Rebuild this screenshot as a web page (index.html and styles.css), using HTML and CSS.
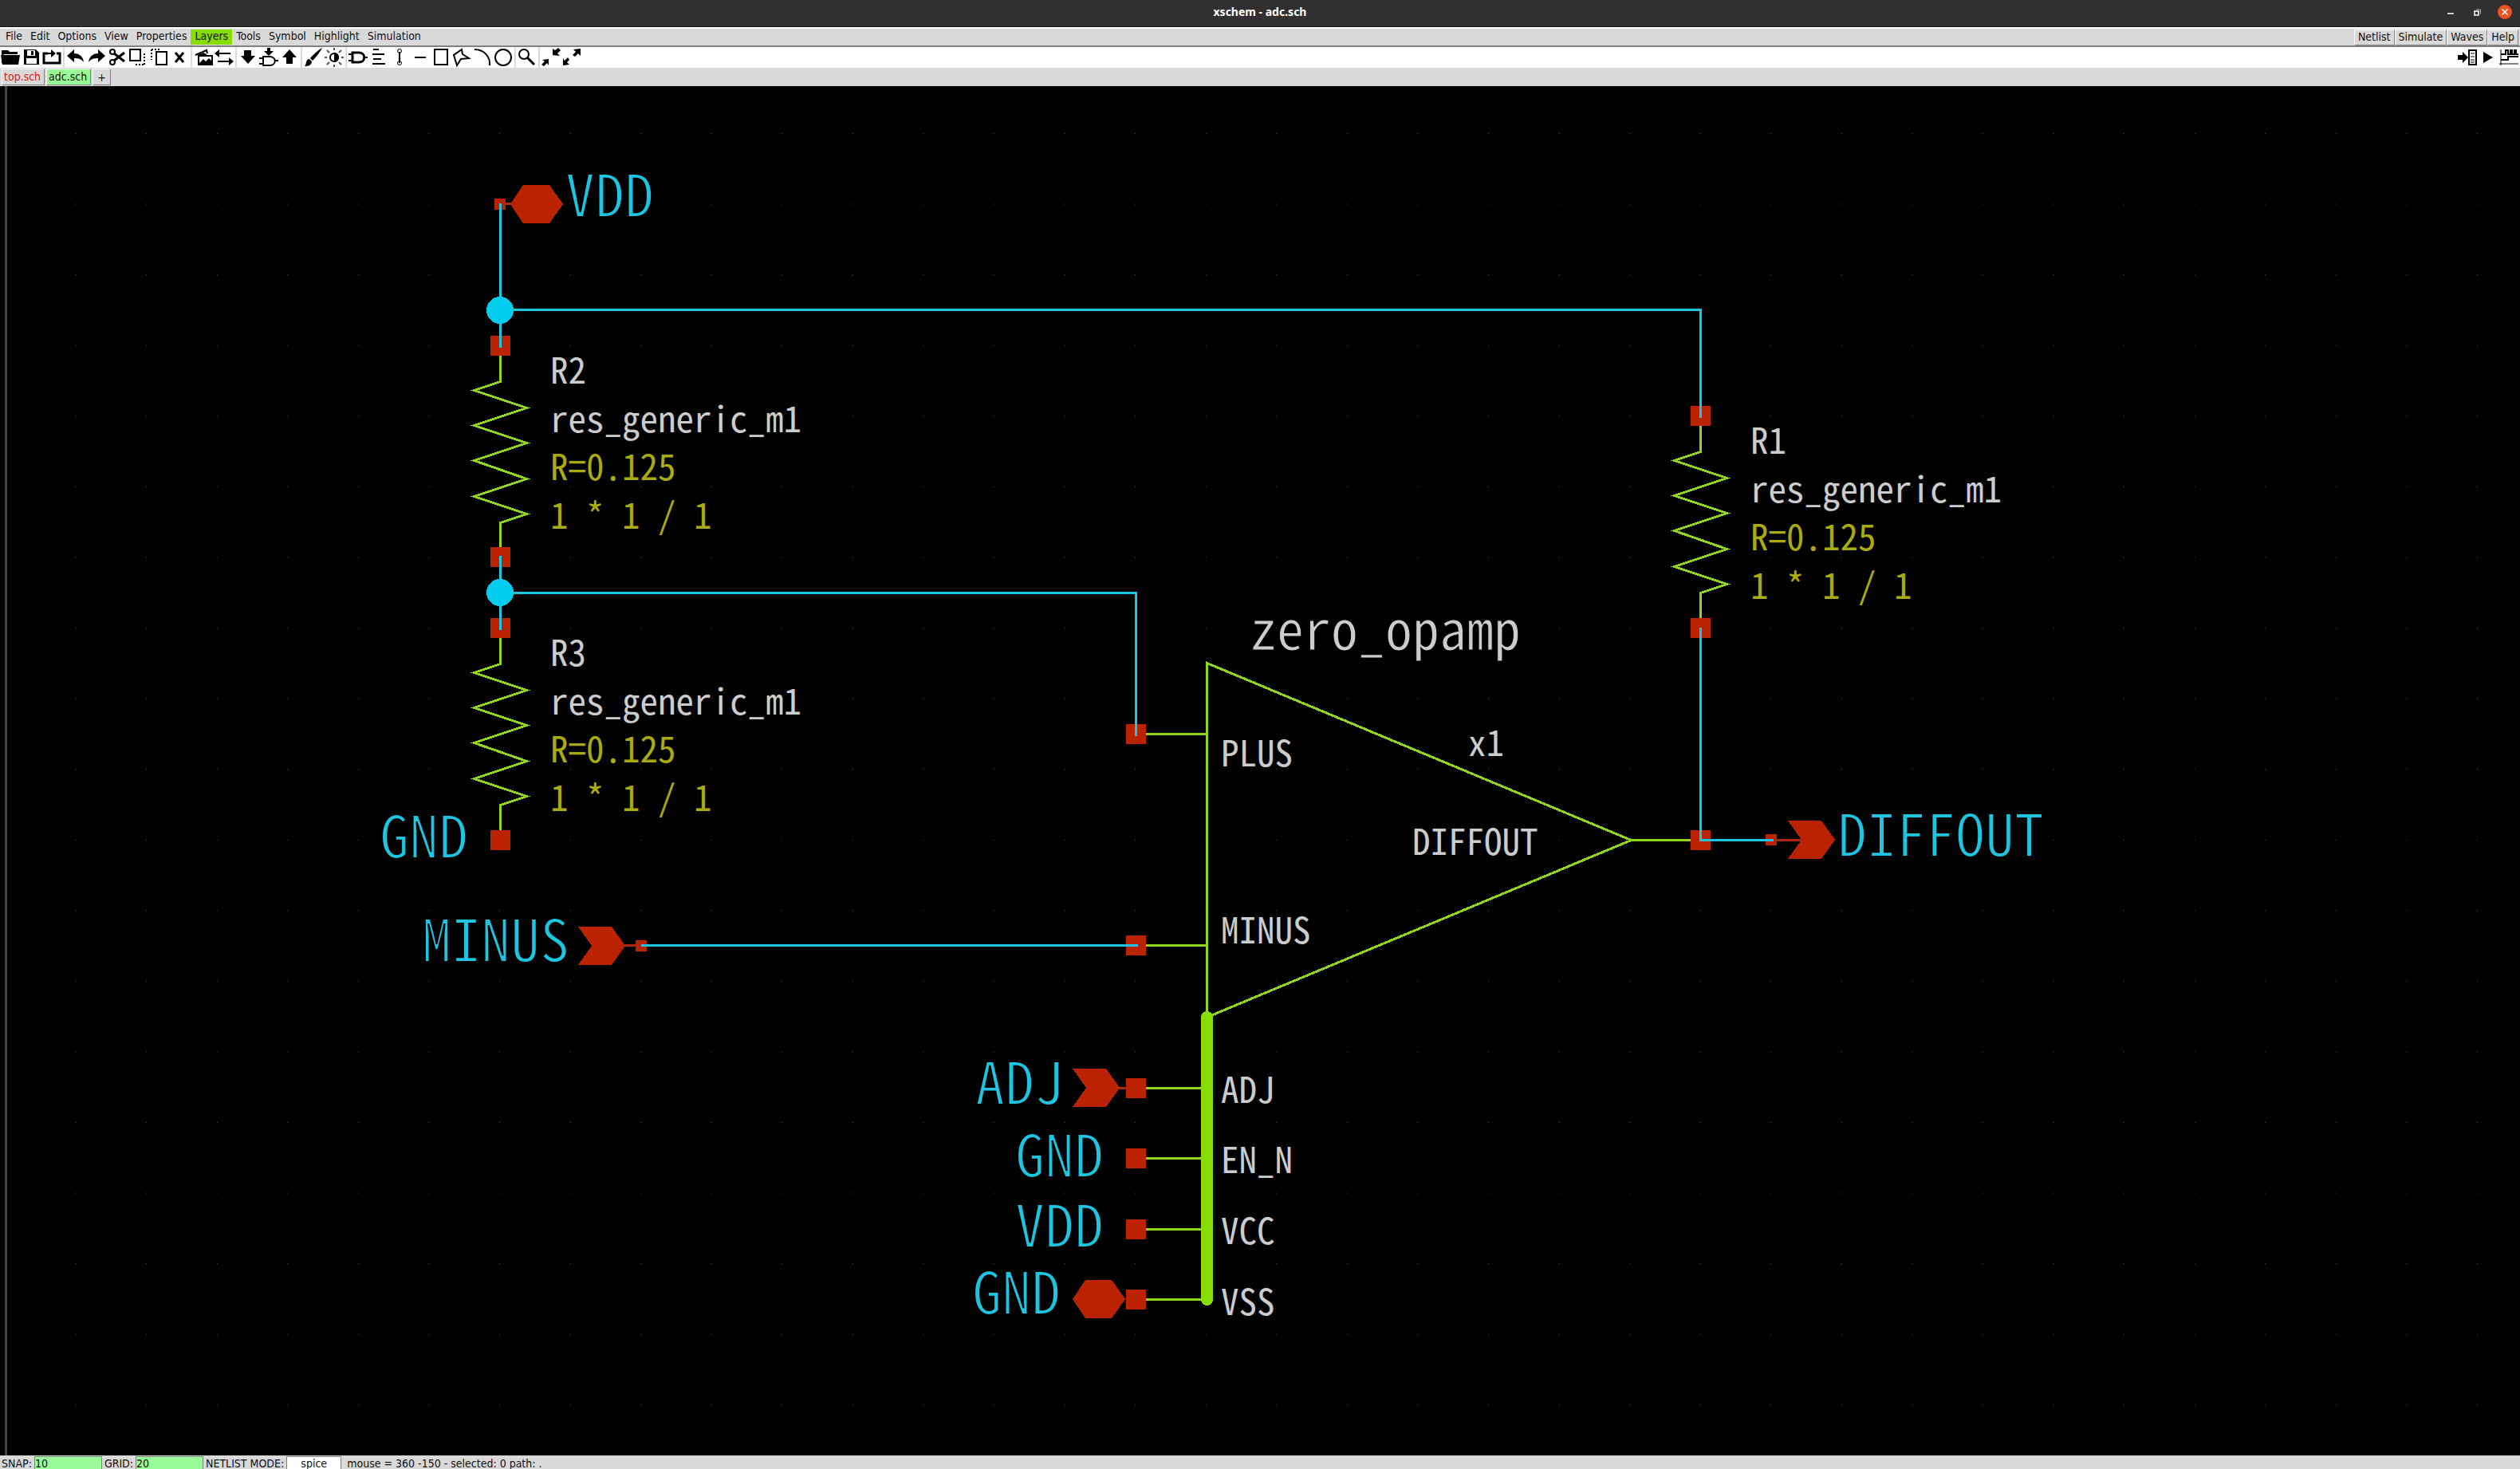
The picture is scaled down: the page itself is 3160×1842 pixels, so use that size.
FILE: index.html
```html
<!DOCTYPE html>
<html lang="en">
<head>
<meta charset="utf-8">
<title>xschem - adc.sch</title>
<link rel="stylesheet" href="styles.css">
</head>
<body>
<div class="window">
  <header class="titlebar">
    <span class="titlebar-side"></span>
    <h1 class="title">xschem - adc.sch</h1>
    <div class="titlebar-side window-controls">
      <button class="control" aria-label="Minimize"><svg viewBox="0 0 18 18"><path d="M5 11h8" stroke="#fff" stroke-width="1.5"/></svg></button>
      <button class="control" aria-label="Restore"><svg viewBox="0 0 18 18" fill="none"><path d="M5 8h5v5H5z" stroke="#fff" stroke-width="1.5"/><path d="M7 6h5.500v5.500" stroke="#aaa"/></svg></button>
      <button class="control close" aria-label="Close"><svg viewBox="0 0 18 18"><path d="M5.500 5.500l7 7M12.500 5.500l-7 7" stroke="#fff" stroke-width="1.500"/></svg></button>
    </div>
  </header>

  <nav class="menubar">
    <button class="menu">File</button>
    <button class="menu">Edit</button>
    <button class="menu">Options</button>
    <button class="menu">View</button>
    <button class="menu">Properties</button>
    <button class="menu layers">Layers</button>
    <button class="menu">Tools</button>
    <button class="menu">Symbol</button>
    <button class="menu">Highlight</button>
    <button class="menu">Simulation</button>
    <div class="menubar-end">
      <button class="menu raised">Netlist</button>
      <button class="menu raised">Simulate</button>
      <button class="menu raised">Waves</button>
      <button class="menu raised">Help</button>
    </div>
  </nav>

  <div class="toolbar" role="toolbar">
    <button class="tool" aria-label="Open"><svg viewBox="0 0 24 24"><path class="solid" d="M1 3h8l2 2h10v3H4L2 11V19H1zM0 9h24l-2 12H2z"/></svg></button>
    <button class="tool" aria-label="Save"><svg viewBox="0 0 24 24"><path class="solid" fill-rule="evenodd" d="M3 2h15l4 4v15H3zM7 3v7h10V3zM12 4h3v5h-3zM6 13v7h13v-7z"/></svg></button>
    <button class="tool" aria-label="Reload"><svg viewBox="0 0 24 24"><path class="line heavy" d="M7 7H2v12h20V7h-4"/><path class="line" d="M7 7h7"/><path class="solid" d="M11 2l6 5-6 5z"/></svg></button>
    <span class="separator"></span>
    <button class="tool" aria-label="Undo"><svg viewBox="0 0 24 24"><path class="solid" d="M1 10l9-8v5c7 0 11 4 12 11-3-4-6-5-12-5v5z"/></svg></button>
    <button class="tool" aria-label="Redo"><svg viewBox="0 0 24 24"><path class="solid" d="M23 10l-9-8v5C7 7 3 11 2 18c3-4 6-5 12-5v5z"/></svg></button>
    <button class="tool" aria-label="Cut"><svg viewBox="0 0 24 24"><circle class="line" cx="6" cy="5" r="3"/><circle class="line" cx="6" cy="18" r="3"/><path class="line heavy" d="M8 7l13 10M8 16L21 6"/></svg></button>
    <button class="tool" aria-label="Copy"><svg viewBox="0 0 24 24"><path class="line" d="M2 2h13v14H2z"/><path class="line dots" d="M20 7v14M9 21h11"/></svg></button>
    <button class="tool" aria-label="Move"><svg viewBox="0 0 24 24"><path class="line" d="M9 5h13v16H9z"/><path class="line dots" d="M3 2v13M3 2h12"/></svg></button>
    <button class="tool" aria-label="Delete"><svg viewBox="0 0 24 24"><path class="line heavy" d="M7 6l10 12M17 6L7 18"/></svg></button>
    <span class="separator"></span>
    <button class="tool" aria-label="Merge"><svg viewBox="0 0 24 24"><path class="line" d="M2 9l14-6 1 4M6 10h17v11H6z"/><path class="solid" d="M4 9l8-3 4 2v1H4zM7 19l5-5 3 3 4-4 3 3v4H7z"/></svg></button>
    <button class="tool" aria-label="Swap"><svg viewBox="0 0 24 24"><path class="line" d="M4 7h16M4 17h16"/><path class="solid" d="M0 7l6-5v10zM24 17l-6-5v10z"/></svg></button>
    <span class="separator"></span>
    <button class="tool" aria-label="Descend"><svg viewBox="0 0 24 24"><path class="solid" d="M7 3h9v7h5l-9 10-9-10h4z"/></svg></button>
    <button class="tool" aria-label="Descend into symbol"><svg viewBox="0 0 24 24"><path class="solid" d="M10 0h4v4h4l-6 6-6-6h4z"/><path class="line" d="M5 11h8c9 0 9 11 0 11H5zM0 13h5M0 20h5M19 16h5"/></svg></button>
    <button class="tool" aria-label="Go back"><svg viewBox="0 0 24 24"><path class="solid" d="M8 20h8v-8h5L12 2l-9 10h5z"/></svg></button>
    <span class="separator"></span>
    <button class="tool" aria-label="Highlight"><svg viewBox="0 0 24 24"><path class="solid" d="M23 0C19 2 11 9 8 13l3 3c5-5 10-12 12-16zM7 14c-5 0-3 6-6 9 4 0 9-1 9-6z"/></svg></button>
    <button class="tool" aria-label="Brightness"><svg viewBox="0 0 24 24"><circle class="line" cx="12" cy="12" r="5"/><path class="solid" d="M12 6a6 6 0 0 1 0 12z"/><path class="line faint" d="M12 0v3M12 21v3M0 12h3M21 12h3M3 3l3 3M18 18l3 3M3 21l3-3M18 6l3-3"/></svg></button>
    <span class="separator"></span>
    <button class="tool" aria-label="Insert symbol"><svg viewBox="0 0 24 24"><path class="line heavy" d="M5 6h8c9 0 9 12 0 12H5z"/><path class="line" d="M0 8h5M0 16h5M19 12h5"/></svg></button>
    <button class="tool" aria-label="Insert text"><svg viewBox="0 0 24 24"><path class="line" d="M5 2h7M4 8h15M5 14h10M4 20h16"/></svg></button>
    <button class="tool" aria-label="Insert wire"><svg viewBox="0 0 24 24"><path class="line" d="M12 5v14"/><circle class="line thin" cx="12" cy="4" r="2.500"/><circle class="line thin" cx="12" cy="19" r="2.500"/></svg></button>
    <button class="tool" aria-label="Insert line"><svg viewBox="0 0 24 24"><path class="line" d="M5 12h14"/></svg></button>
    <button class="tool" aria-label="Insert rectangle"><svg viewBox="0 0 24 24"><path class="line" d="M4 2h16v19H4z"/></svg></button>
    <button class="tool" aria-label="Insert polygon"><svg viewBox="0 0 24 24"><path class="line" d="M12 2L2 9l4 13 5-8 10-1-8-5z"/></svg></button>
    <button class="tool" aria-label="Insert arc"><svg viewBox="0 0 24 24"><path class="line" d="M2 2c12 0 20 9 19 20"/></svg></button>
    <button class="tool" aria-label="Insert circle"><svg viewBox="0 0 24 24"><circle class="line" cx="12" cy="12" r="10"/></svg></button>
    <span class="separator"></span>
    <button class="tool" aria-label="Zoom box"><svg viewBox="0 0 24 24"><circle class="line" cx="8" cy="8" r="6"/><path class="line heavy" d="M12 12l9 9"/></svg></button>
    <span class="separator"></span>
    <button class="tool" aria-label="Zoom out"><svg viewBox="0 0 24 24"><path class="solid" d="M14 1l3 2 4-3 3 3-4 4 3 3-9-1zM9 14l-8 1 3 2-4 4 3 2 4-4 2 3z"/></svg></button>
    <button class="tool" aria-label="Zoom in"><svg viewBox="0 0 24 24"><path class="solid" d="M23 1l-9 1 3 3-4 4 3 2 4-4 3 3zM1 22l8-1-3-3 3-3-2-3-4 4-2-3z"/></svg></button>
    <div class="toolbar-end">
      <button class="tool" aria-label="Netlist"><svg viewBox="0 0 24 24"><path class="solid" d="M0 9h6V5l7 7-7 7v-4H0z"/><path class="line" d="M14 3h9v18h-9z"/><path class="line thin" d="M16 7h5M16 11h5M16 15h5M16 18h5"/></svg></button>
      <button class="tool" aria-label="Simulate"><svg viewBox="0 0 24 24"><path class="solid" d="M6 5l12 7-12 7z"/></svg></button>
      <button class="tool" aria-label="Waves"><svg viewBox="0 0 24 24"><path class="line thin" d="M2 2v20M0 20h24"/><path class="line" d="M2 8h6V3h3v5h3V3h2v5h3V3h2v5h3M2 15h9v-4h13"/></svg></button>
    </div>
  </div>

  <div class="tabs" role="tablist">
    <button class="tab modified" role="tab">top.sch</button>
    <button class="tab active" role="tab" aria-selected="true">adc.sch</button>
    <button class="tab add" aria-label="New tab">+</button>
  </div>

  <main class="canvas">
    <svg class="sheet" viewBox="0 108 3160 1717" preserveAspectRatio="xMinYMin meet">
      <defs>
        <pattern id="grid" x="6" y="167" width="88.57" height="88.57" patternUnits="userSpaceOnUse">
          <rect class="grid-dot" width="1" height="1"/>
        </pattern>
        <g id="pin"><rect class="pin" x="-12" y="-12" width="25" height="25"/></g>
        <g id="port"><rect class="pin" x="-7" y="-7" width="14" height="14"/></g>
        <g id="chevron"><path class="pin" d="M0-24h42l17 24-17 24H0l17-24z"/></g>
        <g id="hexagon"><path class="pin" d="M0 0l16-24h33l17 24-17 24H16z"/></g>
        <g id="junction"><circle class="junction" r="17"/></g>
        <g id="resistor"><path class="shape" d="M0 0V44L-33 55 33 77-33 99 33 121-33 143 33 166-33 188 33 210 0 221V265"/></g>
      </defs>

      <rect x="0" y="108" width="3160" height="1717" fill="url(#grid)"/>
      <rect class="axis" x="6" y="108" width="3" height="1717"/>

      <!-- resistors -->
      <g transform="translate(.5 .5)">
        <use href="#resistor" x="627" y="434"/>
        <use href="#resistor" x="627" y="788"/>
        <use href="#resistor" x="2132" y="522"/>
      </g>

      <!-- op-amp body and pin leads -->
      <g transform="translate(.5 .5)">
        <path class="shape" d="M1513 831V1275L2045 1053zM1425 920H1513M1425 1185H1513M2045 1053H2132"/>
        <path class="shape" d="M1425 1364H1513M1425 1452H1513M1425 1541H1513M1425 1629H1513"/>
        <path class="bus" d="M1513 1275V1629"/>
      </g>

      <!-- pins -->
      <use href="#pin" x="627" y="433"/>
      <use href="#pin" x="627" y="698"/>
      <use href="#pin" x="627" y="787"/>
      <use href="#pin" x="627" y="1053"/>
      <use href="#pin" x="2132" y="521"/>
      <use href="#pin" x="2132" y="787"/>
      <use href="#pin" x="2132" y="1053"/>
      <use href="#pin" x="1424" y="920"/>
      <use href="#pin" x="1424" y="1185"/>
      <use href="#pin" x="1424" y="1364"/>
      <use href="#pin" x="1424" y="1452"/>
      <use href="#pin" x="1424" y="1541"/>
      <use href="#pin" x="1424" y="1629"/>

      <!-- ports -->
      <path class="stub" transform="translate(.5 .5)" d="M627 255H645M780 1185H804M2222 1053H2262M1400 1364H1414"/>
      <use href="#port" x="627" y="256"/>
      <use href="#port" x="804" y="1186"/>
      <use href="#port" x="2221" y="1053"/>
      <use href="#hexagon" x="640" y="256"/>
      <use href="#hexagon" x="1345" y="1629"/>
      <use href="#chevron" x="725" y="1186"/>
      <use href="#chevron" x="1345" y="1364"/>
      <use href="#chevron" x="2242" y="1053"/>

      <!-- wires -->
      <path class="wire" transform="translate(.5 .5)" d="M627 254V435M627 388H2132V523M627 696V789M627 743H1424V922M803 1185H1426M2132 786V1053H2223"/>
      <use href="#junction" x="627" y="389"/>
      <use href="#junction" x="627" y="743"/>

      <!-- net labels -->
      <g class="net">
        <text x="709" y="272">VDD</text>
        <text x="476" y="1076">GND</text>
        <text x="529" y="1206">MINUS</text>
        <text x="1223" y="1385">ADJ</text>
        <text x="1273" y="1476">GND</text>
        <text x="1273" y="1564">VDD</text>
        <text x="1219" y="1648">GND</text>
        <text x="2304" y="1074">DIFFOUT</text>
      </g>

      <!-- component labels -->
      <g class="label">
        <text x="690" y="481">R2</text>
        <text x="690" y="542">res_generic_m1</text>
        <text class="value" x="690" y="602">R=0.125</text>
        <text class="value" x="690" y="663">1 * 1 / 1</text>

        <text x="690" y="835">R3</text>
        <text x="690" y="896">res_generic_m1</text>
        <text class="value" x="690" y="956">R=0.125</text>
        <text class="value" x="690" y="1017">1 * 1 / 1</text>

        <text x="2195" y="569">R1</text>
        <text x="2195" y="630">res_generic_m1</text>
        <text class="value" x="2195" y="690">R=0.125</text>
        <text class="value" x="2195" y="751">1 * 1 / 1</text>

        <text x="1841" y="948">x1</text>
        <text x="1531" y="961">PLUS</text>
        <text x="1531" y="1183">MINUS</text>
        <text x="1771" y="1072">DIFFOUT</text>
        <text x="1531" y="1383">ADJ</text>
        <text x="1531" y="1471">EN_N</text>
        <text x="1531" y="1560">VCC</text>
        <text x="1531" y="1649">VSS</text>
        <text class="cell-name" x="1567" y="815">zero_opamp</text>
      </g>
    </svg>
  </main>

  <footer class="statusbar">
    <label for="snap">SNAP:</label>
    <input class="entry" id="snap" type="text" value="10">
    <label for="grid-size">GRID:</label>
    <input class="entry" id="grid-size" type="text" value="20">
    <label for="mode">NETLIST MODE:</label>
    <input class="entry mode" id="mode" type="text" value="spice">
    <span class="message">mouse = 360 -150 - selected: 0 path: .</span>
  </footer>
</div>
</body>
</html>
```
FILE: styles.css
```css
* {
  box-sizing: border-box;
}

body {
  margin: 0;
  background: #000;
  color: #111;
  font: 14px/18px "DejaVu Sans Condensed", "DejaVu Sans", sans-serif;
}

button,
input {
  margin: 0;
  padding: 0;
  border: 0;
  background: none;
  color: inherit;
  font: inherit;
}

.window {
  display: flex;
  flex-direction: column;
  height: 100vh;
  overflow: hidden;
}

/* title bar */
.titlebar {
  flex: none;
  display: flex;
  align-items: center;
  height: 34px;
  padding-bottom: 3px;
  border-bottom: 1px solid #1a1719;
  background: #322f30;
}

.titlebar-side {
  flex: 1;
  padding: 0 10px;
}

.title {
  margin: 0;
  color: #fff;
  font: bold 14px/18px "Noto Sans", sans-serif;
}

.window-controls {
  display: flex;
  justify-content: flex-end;
  gap: 16px;
}

.control {
  width: 18px;
  height: 18px;
  border-radius: 50%;
}

.control svg {
  display: block;
}

.close {
  background: #e95420;
}

/* menu bar */
.menubar {
  flex: none;
  display: flex;
  height: 25px;
  padding: 1px 2px 0 2px;
  border-top: 2px solid #fff;
  border-bottom: 2px solid #808080;
  background: #d9d9d9;
}

.menu {
  height: 19px;
  padding: 0 5px 2px;
  line-height: 17px;
  white-space: nowrap;
}

.layers {
  background: #88dd00;
}

.menubar-end {
  display: flex;
  margin-left: auto;
}

.raised {
  height: 20px;
  padding: 0 4px 2px;
  border: 1px solid;
  border-color: #fff #808080 #808080 #fff;
}

/* tool bar */
.toolbar {
  flex: none;
  display: flex;
  align-items: center;
  height: 26px;
  background: #fff;
}

.tool {
  width: 26px;
  height: 26px;
  padding: 0 1px;
}

.tool svg {
  display: block;
  width: 24px;
  height: 24px;
}

.solid {
  fill: #000;
}

.line {
  fill: none;
  stroke: #000;
  stroke-width: 2;
}

.heavy {
  stroke-width: 3;
}

.thin {
  stroke-width: 1;
}

.dots {
  stroke-dasharray: 2 2;
}

.faint {
  stroke: #555;
}

.separator {
  width: 2px;
  height: 26px;
  margin: 0 1px;
  background: #d9d9d9;
}

.toolbar-end {
  display: flex;
  margin-left: auto;
  padding-right: 1px;
}

/* tabs */
.tabs {
  flex: none;
  display: flex;
  gap: 2px;
  height: 23px;
  padding: 1px 2px;
  background: #d9d9d9;
}

.tab {
  height: 21px;
  padding: 0 4px 2px 2px;
  border: 1px solid;
  border-color: #fff #808080 #808080 #fff;
  line-height: 16px;
}

.modified {
  color: #e01818;
}

.active {
  background: #98fb98;
}

.add {
  padding: 0 5px;
}

/* drawing area */
.canvas {
  flex: 1;
  min-height: 0;
}

.sheet {
  display: block;
  width: 100%;
  height: 100%;
  shape-rendering: crispEdges;
}

.grid-dot {
  fill: #555;
  shape-rendering: geometricPrecision;
}

.axis {
  fill: #444;
}

.shape {
  fill: none;
  stroke: #90d61a;
  stroke-width: 3;
}

.bus {
  fill: none;
  stroke: #88dd00;
  stroke-width: 15;
  stroke-linecap: round;
}

.pin {
  fill: #bb2200;
}

.stub {
  fill: none;
  stroke: #aa2810;
  stroke-width: 3;
}

.wire {
  fill: none;
  stroke: #1cc5e1;
  stroke-width: 3;
}

.junction {
  fill: #00ccee;
}

.net,
.label {
  font-family: "Noto Sans Mono CJK SC", "DejaVu Sans Mono", monospace;
  font-weight: 100;
  white-space: pre;
}

/* the dark outline thins the strokes of the large lettering */
.net {
  fill: #1cc5e1;
  stroke: #000;
  stroke-width: 2;
  font-size: 74px;
}

.label {
  fill: #ccc;
  font-size: 45px;
}

.value {
  fill: #aaaa11;
}

.cell-name {
  stroke: #000;
  stroke-width: 1;
  font-size: 68px;
}

/* status bar */
.statusbar {
  flex: none;
  display: flex;
  gap: 3px;
  height: 17px;
  padding: 1px 2px 0;
  overflow: hidden;
  background: #d9d9d9;
  white-space: nowrap;
}

.entry {
  width: 85px;
  height: 18px;
  border: 1px solid #808080;
  background: #98fb98;
}

.mode {
  width: 69px;
  background: #fff;
  text-align: center;
}

.message {
  padding-left: 4px;
}
```
